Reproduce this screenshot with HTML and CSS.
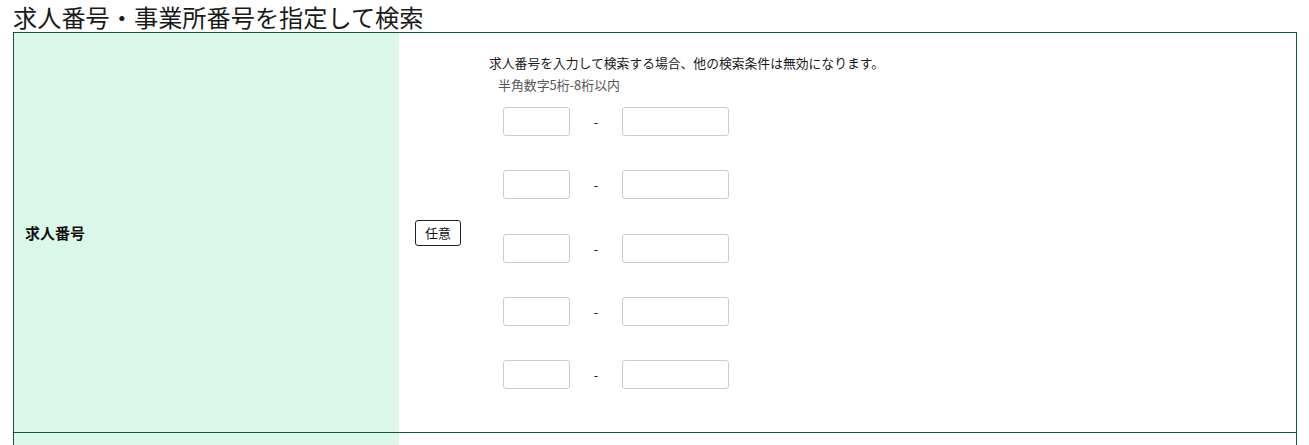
FILE: index.html
```html
<!DOCTYPE html>
<html lang="ja">
<head>
<meta charset="utf-8">
<title>求人番号・事業所番号を指定して検索</title>
<link rel="stylesheet" href="styles.css">
</head>
<body>
<div class="page">
  <h2 class="title">求人番号・事業所番号を指定して検索</h2>
  <table class="search-table">
    <tr class="row">
      <th class="label">求人番号</th>
      <td class="badge-cell"><span class="badge">任意</span></td>
      <td class="content">
        <p class="note">求人番号を入力して検索する場合、他の検索条件は無効になります。</p>
        <p class="hint">半角数字5桁-8桁以内</p>
        <div class="inputs">
          <div class="input-row"><input class="in-short" type="text"><span class="dash">-</span><input class="in-long" type="text"></div>
          <div class="input-row"><input class="in-short" type="text"><span class="dash">-</span><input class="in-long" type="text"></div>
          <div class="input-row"><input class="in-short" type="text"><span class="dash">-</span><input class="in-long" type="text"></div>
          <div class="input-row"><input class="in-short" type="text"><span class="dash">-</span><input class="in-long" type="text"></div>
          <div class="input-row"><input class="in-short" type="text"><span class="dash">-</span><input class="in-long" type="text"></div>
        </div>
      </td>
    </tr>
    <tr class="row row-next">
      <th class="label"></th>
      <td class="badge-cell"></td>
      <td class="content"></td>
    </tr>
  </table>
</div>
</body>
</html>
```
FILE: styles.css
```css
html, body {
  margin: 0;
  padding: 0;
  background: #fff;
}
body {
  font-family: "Noto Sans CJK JP", "Noto Sans", sans-serif;
  color: #222;
}
.page {
  padding: 0 12px 0 13px;
}
.title {
  margin: 0;
  padding-top: 3px;
  height: 29px;
  line-height: 28px;
  font-size: 24.2px;
  font-weight: normal;
  color: #1a1a1a;
  white-space: nowrap;
}
.search-table {
  width: 100%;
  border-collapse: collapse;
  border: 1px solid #0c5a36;
}
.row {
  border-bottom: 1px solid #0c5a36;
}
.label {
  width: 374px;
  padding: 0 0 0 11px;
  background: #dcf8ea;
  text-align: left;
  vertical-align: middle;
  font-size: 15px;
  font-weight: bold;
  color: #111;
}
.badge-cell {
  width: 74px;
  padding: 0 0 0 16px;
  vertical-align: middle;
}
.badge {
  display: inline-block;
  box-sizing: border-box;
  height: 26px;
  line-height: 23px;
  padding: 0 9px;
  border: 1px solid #222;
  border-radius: 3px;
  font-size: 13px;
  color: #111;
}
.content {
  padding: 19px 0 43px 0;
  vertical-align: top;
}
.note {
  margin: 0;
  font-size: 12.8px;
  line-height: 22px;
  color: #1a1a1a;
}
.hint {
  margin: 0 0 0 9px;
  font-size: 12.9px;
  line-height: 22px;
  color: #555;
}
.inputs {
  display: flex;
  flex-direction: column;
  gap: 34.25px;
  margin: 11px 0 0 14px;
}
.input-row {
  display: flex;
  align-items: center;
  height: 29px;
}
.in-short, .in-long {
  box-sizing: border-box;
  height: 29px;
  margin: 0;
  padding: 0 4px;
  border: 1px solid #cccccc;
  border-radius: 3px;
  background: #fff;
  font: inherit;
}
.in-short {
  width: 67px;
}
.in-long {
  width: 107px;
}
.dash {
  width: 52px;
  text-align: center;
  font-size: 13px;
  color: #1a1a1a;
}
.row-next .label,
.row-next .content {
  height: 60px;
}
```
